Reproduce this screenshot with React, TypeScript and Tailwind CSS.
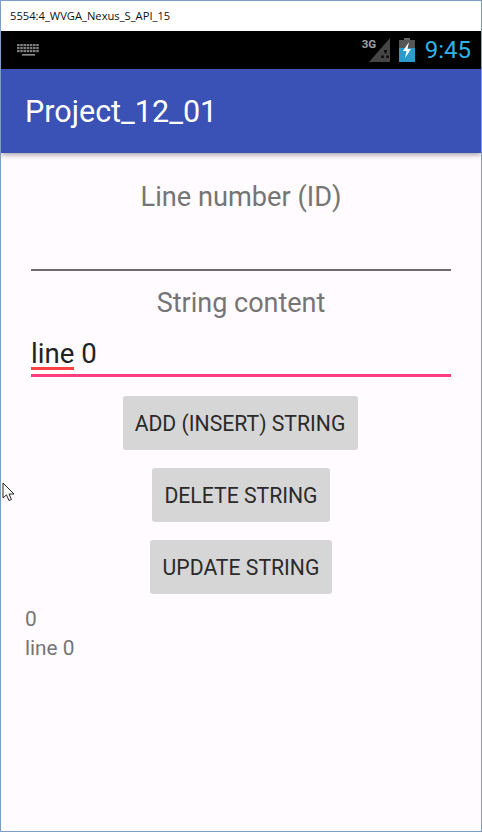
const keyRows = [
  { y: 0, n: 7 },
  { y: 3, n: 7 },
  { y: 6, n: 7 },
];

export default function App() {
  const btn = "h-[54px] rounded-[3px] bg-[#d6d6d6] pt-[2px] text-[21.2px] text-[#2a2a2a] flex items-center justify-center";
  return (
    <div className="relative flex h-[832px] w-[482px] flex-col overflow-hidden border-x border-b border-[#7a9ec6] bg-[#fffbff] font-['Roboto',sans-serif]">
      <div className="flex h-[31px] shrink-0 items-center border-t border-[#7a9ec6] bg-white pl-[9px] font-['Open_Sans',sans-serif] text-[11.2px] text-[#111]">
        5554:4_WVGA_Nexus_S_API_15
      </div>
      <div className="flex h-[38px] shrink-0 items-center justify-between bg-black pl-[16px] pr-[10px]">
        <svg width="23" height="12" viewBox="0 0 23 12" fill="#7c7c7c">
          {keyRows.map((r) =>
            Array.from({ length: r.n }).map((_, i) => (
              <rect key={`${r.y}-${i}`} x={i * 3.2} y={r.y} width="2.6" height="2.2" />
            )),
          )}
          <rect x="5" y="10" width="13" height="1.6" fill="#8c8c8c" />
        </svg>
        <div className="flex items-center">
          <div className="relative mr-[9px] h-[24px] w-[21px]">
            <svg width="21" height="24" viewBox="0 0 21 24" className="absolute left-0 top-0">
              <path d="M21 0V24H0Z" fill="#454545" />
              <path d="M15 14l1.5 2 1.5-2v-2h-3ZM12 20h3v-2.5h-3ZM17 20h3v-2.5h-3Z" fill="#111" />
            </svg>
            <span className="absolute left-[-7px] top-[1px] text-[11.5px] font-bold leading-none text-[#a0a0a0]">3G</span>
          </div>
          <svg width="16" height="24" viewBox="0 0 16 24" className="mr-[10px]">
            <rect x="5" y="0" width="6" height="2" fill="#666" />
            <rect x="0" y="2" width="16" height="22" fill="#555" />
            <rect x="0" y="10" width="16" height="14" fill="#2a9ccb" />
            <path d="M10 4 4 13h3.5L6 20l6-9H8.5Z" fill="#fff" />
          </svg>
          <span className="text-[24px] leading-none text-[#2fb3e6]">9:45</span>
        </div>
      </div>
      <div className="flex h-[84px] shrink-0 items-center bg-[#3a51b5] pl-[24px] pt-[2px] text-[30.5px] text-white shadow-[0_2px_5px_rgba(0,0,0,0.35)]">
        Project_12_01
      </div>
      <main className="flex flex-1 flex-col px-[30px]">
        <div className="mt-[27px] text-center text-[27.2px] leading-[34px] text-[#757575]">Line number (ID)</div>
        <div className="mt-[55px] h-[2px] bg-[#6f6a6e]" />
        <div className="mt-[15px] text-center text-[27px] leading-[34px] text-[#757575]">String content</div>
        <div className="mt-[14px] flex h-[40px] items-center text-[27.6px] text-[#222]">
          <span className="relative">
            line
            <span className="absolute bottom-[5px] left-0 h-[3px] w-full bg-[#f94144]" />
          </span>
          <span>&nbsp;0</span>
        </div>
        <div className="h-[3px] bg-[#ff3d7f]" />
        <div className="mt-[19px] flex flex-col items-center gap-[18px]">
          <div className={`${btn} mr-[2px] w-[235px]`}>ADD (INSERT) STRING</div>
          <div className={`${btn} w-[178px]`}>DELETE STRING</div>
          <div className={`${btn} w-[182px]`}>UPDATE STRING</div>
        </div>
        <div className="-ml-[6px] mt-[11px] text-[20.8px] leading-[29px] text-[#757575]">
          <div>0</div>
          <div>line 0</div>
        </div>
      </main>
      <svg width="13" height="20" viewBox="0 0 13 20" className="absolute left-[1px] top-[482px]">
        <path d="M1 1v15l3.5-3.2L7 18.5l2.5-1L7 12h5Z" fill="#fff" stroke="#222" strokeWidth="1" />
      </svg>
    </div>
  );
}
